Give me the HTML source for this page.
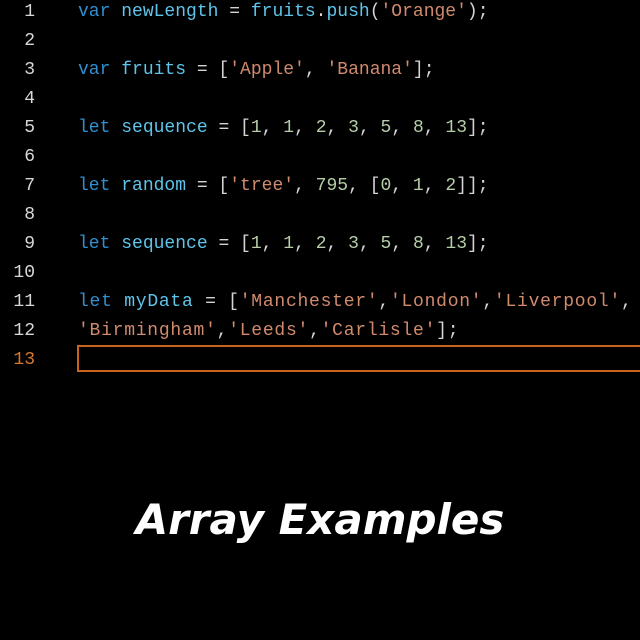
<!DOCTYPE html>
<html><head><style>
html,body{margin:0;padding:0;background:#000;width:640px;height:640px;overflow:hidden}
.code{position:absolute;left:0;top:0;font-family:"Liberation Mono",monospace;font-size:18px;}
.l{position:absolute;left:0;height:29px;line-height:29px;white-space:pre;width:640px}
.n{position:absolute;left:0;width:35px;text-align:right;color:#d8d8d8}
.t{position:absolute;left:78px;color:#d4d4d4}
.k{color:#2f8fd0}.v{color:#5ec4ea}.s{color:#d08a6e}.d{color:#b5cea8}
.c .t{letter-spacing:0.75px}
.box{position:absolute;left:77px;top:345px;width:570px;height:27px;border:2px solid #c8641e;box-sizing:border-box}
h1{position:absolute;top:495px;left:0;width:640px;text-align:center;margin:0;font-family:"DejaVu Sans","Liberation Sans",sans-serif;font-style:italic;font-weight:bold;font-size:42px;color:#fff}
</style></head><body>
<div class="code">
<div class="l" style="top:-2px"><span class="n">1</span><span class="t"><span class="k">var</span> <span class="v">newLength</span> = <span class="v">fruits</span>.<span class="v">push</span>(<span class="s">'Orange'</span>);</span></div>
<div class="l" style="top:27px"><span class="n">2</span></div>
<div class="l" style="top:56px"><span class="n">3</span><span class="t"><span class="k">var</span> <span class="v">fruits</span> = [<span class="s">'Apple'</span>, <span class="s">'Banana'</span>];</span></div>
<div class="l" style="top:85px"><span class="n">4</span></div>
<div class="l" style="top:114px"><span class="n">5</span><span class="t"><span class="k">let</span> <span class="v">sequence</span> = [<span class="d">1</span>, <span class="d">1</span>, <span class="d">2</span>, <span class="d">3</span>, <span class="d">5</span>, <span class="d">8</span>, <span class="d">13</span>];</span></div>
<div class="l" style="top:143px"><span class="n">6</span></div>
<div class="l" style="top:172px"><span class="n">7</span><span class="t"><span class="k">let</span> <span class="v">random</span> = [<span class="s">'tree'</span>, <span class="d">795</span>, [<span class="d">0</span>, <span class="d">1</span>, <span class="d">2</span>]];</span></div>
<div class="l" style="top:201px"><span class="n">8</span></div>
<div class="l" style="top:230px"><span class="n">9</span><span class="t"><span class="k">let</span> <span class="v">sequence</span> = [<span class="d">1</span>, <span class="d">1</span>, <span class="d">2</span>, <span class="d">3</span>, <span class="d">5</span>, <span class="d">8</span>, <span class="d">13</span>];</span></div>
<div class="l" style="top:259px"><span class="n">10</span></div>
<div class="l c" style="top:288px"><span class="n">11</span><span class="t"><span class="k">let</span> <span class="v">myData</span> = [<span class="s">'Manchester'</span>,<span class="s">'London'</span>,<span class="s">'Liverpool'</span>,</span></div>
<div class="l c" style="top:317px"><span class="n">12</span><span class="t"><span class="s">'Birmingham'</span>,<span class="s">'Leeds'</span>,<span class="s">'Carlisle'</span>];</span></div>
<div class="l" style="top:346px"><span class="n" style="color:#d9782c">13</span></div>
</div>
<div class="box"></div>
<h1>Array Examples</h1>
</body></html>
